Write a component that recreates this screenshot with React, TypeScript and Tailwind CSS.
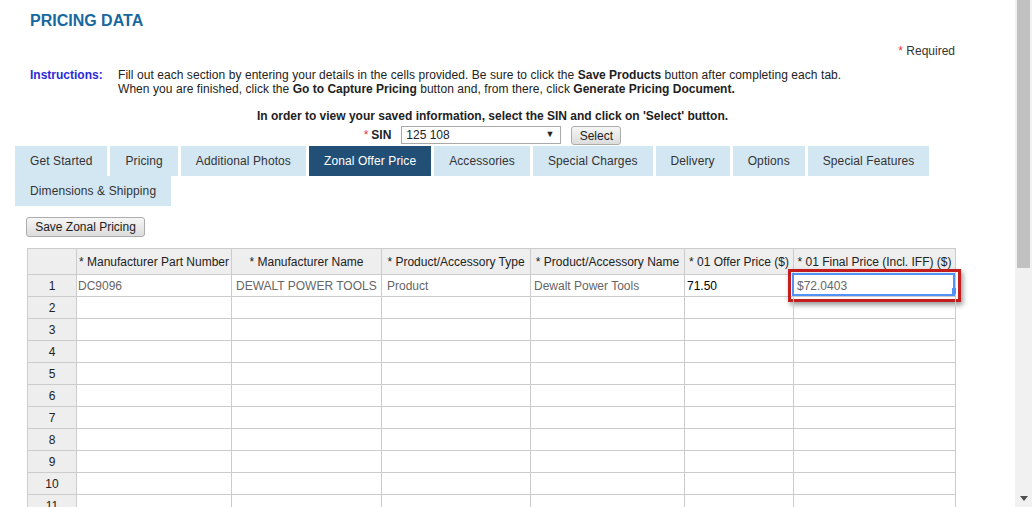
import React from 'react'

const tabs = [
  { label: 'Get Started' },
  { label: 'Pricing' },
  { label: 'Additional Photos' },
  { label: 'Zonal Offer Price', active: true },
  { label: 'Accessories' },
  { label: 'Special Charges' },
  { label: 'Delivery' },
  { label: 'Options' },
  { label: 'Special Features' },
  { label: 'Dimensions & Shipping' },
]

const headers = [
  '',
  '* Manufacturer Part Number',
  '* Manufacturer Name',
  '* Product/Accessory Type',
  '* Product/Accessory Name',
  '* 01 Offer Price ($)',
  '* 01 Final Price (Incl. IFF) ($)',
]

const pads = ['pl-px', 'pl-[4px]', 'pl-[5px]', 'pl-[3px]', 'pl-[2px]', 'pl-[3px]']

const firstRow = ['DC9096', 'DEWALT POWER TOOLS', 'Product', 'Dewalt Power Tools', '71.50', '$72.0403']

const Tab = ({ label, active }: { label: string; active?: boolean }) => (
  <div
    className={`h-[30px] px-[15px] flex items-center whitespace-nowrap tracking-[0.1px] ${
      active ? 'bg-[#224f76] text-white' : 'bg-[#d3e7f3] text-[#333]'
    }`}
  >
    {label}
  </div>
)

const App = () => {
  const rows = Array.from({ length: 12 }, (_, i) => i + 1)

  return (
    <div className="flex h-[507px] w-[1032px] overflow-hidden bg-white font-['Liberation_Sans',Arial,sans-serif] text-[12px] text-[#222]">
      {/* page */}
      <div className="flex-1 overflow-hidden">
        <div className="w-[955px] ml-[15px]">
          <h1 className="ml-[15px] pt-[11px] text-[16px] leading-[20px] font-bold text-[#17689e]">
            PRICING DATA
          </h1>

          <div className="mt-[13px] mr-[15px] text-right leading-[14px] text-[#333]">
            <span className="text-[#e53935]">*</span> Required
          </div>

          {/* Instructions */}
          <div className="mt-[10px] ml-[15px] flex leading-[14px]">
            <div className="w-[88px] shrink-0 font-bold text-[#2b2bdb]">Instructions:</div>
            <div className="tracking-[0.06px]">
              Fill out each section by entering your details in the cells provided. Be sure to click the{' '}
              <b className="tracking-normal">Save Products</b> button after completing each tab.
              <br />
              When you are finished, click the <b className="tracking-normal">Go to Capture Pricing</b> button and,
              from there, click <b className="tracking-normal">Generate Pricing Document.</b>
            </div>
          </div>

          <div className="mt-[13px] text-center font-bold leading-[14px]">
            In order to view your saved information, select the SIN and click on 'Select' button.
          </div>

          {/* SIN */}
          <div className="mt-[2px] h-[20px] flex items-center justify-center">
            <span className="text-[#e53935] mr-[3px]">*</span>
            <span className="font-bold">SIN</span>
            <div className="ml-[10px] w-[160px] h-[18px] border border-[#a9a9a9] bg-white flex items-center justify-between pl-[4px] pr-[6px]">
              <span>125 108</span>
              <span className="text-[9px]">▼</span>
            </div>
            <button className="ml-[10px] w-[50px] h-[19px] border border-[#acacac] rounded-[3px] bg-gradient-to-b from-[#f6f6f6] to-[#dcdcdc] text-[#222]">
              Select
            </button>
          </div>

          {/* Tabs */}
          <div className="mt-px flex flex-wrap gap-x-[3px]">
            {tabs.map((t) => (
              <Tab key={t.label} {...t} />
            ))}
          </div>

          <button className="mt-[11px] ml-[11px] w-[119px] h-[20px] border border-[#acacac] rounded-[3px] bg-gradient-to-b from-[#f6f6f6] to-[#dcdcdc] text-[#222]">
            Save Zonal Pricing
          </button>

          {/* Table */}
          <div className="mt-[11px] ml-[12px] w-[929px] grid grid-cols-[49px_155px_150px_149px_154px_109px_162px] border-l border-t border-[#ccc]">
            {headers.map((h, i) => (
              <div
                key={i}
                className="h-[26px] bg-[#eeeeee] border-r border-b border-[#ccc] flex items-center justify-center whitespace-nowrap overflow-hidden text-[#222]"
              >
                {h}
              </div>
            ))}
            {rows.map((r) => (
              <React.Fragment key={r}>
                <div className="h-[22px] bg-[#eeeeee] border-r border-b border-[#ccc] flex items-center justify-center">
                  {r}
                </div>
                {pads.map((p, c) => {
                  const value = r === 1 ? firstRow[c] : ''
                  const selected = r === 1 && c === 5
                  return (
                    <div
                      key={c}
                      className={`relative h-[22px] border-r border-b border-[#ccc] flex items-center whitespace-nowrap ${p} ${
                        c === 4 ? 'text-black' : 'text-[#666]'
                      }`}
                    >
                      {selected && (
                        <>
                          <div className="absolute -inset-[6px] border-[3px] border-[#c41d1d] shadow-[2px_3px_5px_rgba(0,0,0,0.4)]" />
                          <div className="absolute -left-[2px] -top-[2px] right-0 bottom-0 border-2 border-[#5292f7]" />
                          <div className="absolute -right-px bottom-[2px] w-[4px] h-[6px] bg-[#5292f7]" />
                        </>
                      )}
                      <span className="relative">{value}</span>
                    </div>
                  )
                })}
              </React.Fragment>
            ))}
          </div>
        </div>
      </div>

      {/* scrollbar */}
      <div className="w-[17px] h-[507px] bg-[#f1f1f1] flex flex-col items-center">
        <div className="w-[13px] h-[268px] bg-[#c1c1c1]" />
        <div className="flex-1" />
        <svg width="8" height="5" viewBox="0 0 8 5" className="mb-[6px]">
          <path d="M0 0h8L4 5z" fill="#505050" />
        </svg>
      </div>
    </div>
  )
}

export default App
